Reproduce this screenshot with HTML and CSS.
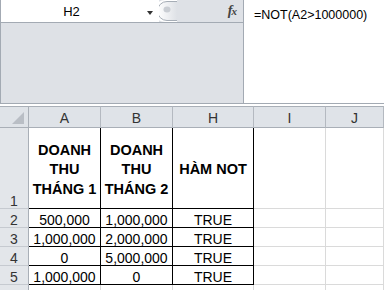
FILE: index.html
```html
<!DOCTYPE html>
<html lang="vi">
<head>
  <meta charset="UTF-8">
  <title>Hàm NOT</title>
  <link rel="stylesheet" href="styles.css">
</head>
<body>
  <div class="top">
    <div class="left">
      <div class="namerow">
        <div class="namebox">
          <span class="ref">H2</span>
          <span class="arrow"></span>
        </div>
        <svg class="knob" width="18" height="22" viewBox="0 0 18 22">
          <defs>
            <linearGradient id="kg" x1="0" y1="0" x2="1" y2="0">
              <stop offset="0" stop-color="#ffffff"/>
              <stop offset="1" stop-color="#dee1e6"/>
            </linearGradient>
          </defs>
          <path d="M18 0 L18 22 L6 22 A10 10 0 0 1 6 0 Z" fill="#fff"/>
          <path d="M18 1.5 L8 1.5 A9.5 9.5 0 0 0 8 20.5 L18 20.5" fill="url(#kg)" stroke="#a6adb6"/>
          <ellipse cx="8" cy="9.5" rx="3.5" ry="3" fill="#c9cdd3"/>
        </svg>
        <span class="fx"><i>f</i><i>x</i></span>
      </div>
    </div>
    <div class="formula">=NOT(A2&gt;1000000)</div>
  </div>
  <div class="gap"></div>

  <div class="sheet">
    <div class="hd corner"><span class="tri"></span></div>
    <div class="hd">A</div>
    <div class="hd">B</div>
    <div class="hd">H</div>
    <div class="hd">I</div>
    <div class="hd">J</div>

    <div class="rh">1</div>
    <div class="c title"><span>DOANH<br>THU<br>THÁNG 1</span></div>
    <div class="c title"><span>DOANH<br>THU<br>THÁNG 2</span></div>
    <div class="c title"><span>HÀM NOT</span></div>
    <div class="c empty"></div>
    <div class="c empty"></div>

    <div class="rh">2</div>
    <div class="c">500,000</div>
    <div class="c">1,000,000</div>
    <div class="c">TRUE</div>
    <div class="c empty"></div>
    <div class="c empty"></div>

    <div class="rh">3</div>
    <div class="c">1,000,000</div>
    <div class="c">2,000,000</div>
    <div class="c">TRUE</div>
    <div class="c empty"></div>
    <div class="c empty"></div>

    <div class="rh">4</div>
    <div class="c">0</div>
    <div class="c">5,000,000</div>
    <div class="c">TRUE</div>
    <div class="c empty"></div>
    <div class="c empty"></div>

    <div class="rh">5</div>
    <div class="c">1,000,000</div>
    <div class="c">0</div>
    <div class="c">TRUE</div>
    <div class="c empty"></div>
    <div class="c empty"></div>

    <div class="rh"></div>
    <div class="c empty"></div>
    <div class="c empty"></div>
    <div class="c empty"></div>
    <div class="c empty"></div>
    <div class="c empty"></div>
  </div>
</body>
</html>
```

FILE: styles.css
```css
body {
  margin: 0;
  width: 384px;
  height: 290px;
  overflow: hidden;
  background: #fff;
  font-family: "Liberation Sans", Arial, sans-serif;
  color: #000;
}
.top {
  display: flex;
  height: 103px;
  border-bottom: 1px solid #a3aab3;
}
.left {
  width: 242px;
  background: #dee1e6;
  border-left: 1px solid #a3aab3;
  border-right: 1px solid #a3aab3;
}
.namerow {
  display: flex;
  align-items: stretch;
  height: 22px;
  border-bottom: 1px solid #a3aab3;
}
.namebox {
  display: flex;
  align-items: center;
  width: 158px;
  background: #fff;
}
.ref {
  width: 141px;
  text-align: center;
  font-size: 13px;
  line-height: 22px;
  padding-top: 2px;
}
.arrow {
  width: 0;
  height: 0;
  margin-left: 5px;
  margin-top: 3px;
  border-left: 3.5px solid transparent;
  border-right: 3.5px solid transparent;
  border-top: 4px solid #333;
}
.knob {
  display: block;
}
.fx {
  margin-left: auto;
  margin-right: 6px;
  font-family: "Liberation Serif", serif;
  font-weight: bold;
  font-size: 14px;
  line-height: 22px;
  color: #444;
}
.fx i + i {
  font-size: 11px;
  margin-left: -1px;
}
.formula {
  flex: 1;
  background: #fff;
  padding: 7px 0 0 10px;
  font-size: 12.5px;
  line-height: 16px;
  white-space: nowrap;
}
.gap {
  height: 2px;
  background: #fff;
}
.sheet {
  display: grid;
  grid-template-columns: 29px 72px 72px 81px 72px 1fr;
  grid-template-rows: 22px 81px 19px 19px 19px 19px 19px;
}
.hd {
  display: flex;
  justify-content: center;
  align-items: center;
  padding-top: 2px;
  background: #dfe3e8;
  border-top: 1px solid #a9afb7;
  border-bottom: 1px solid #a9afb7;
  border-right: 1px solid #b4b9c0;
  font-size: 14px;
  color: #333;
}
.corner {
  position: relative;
  border-right-color: #a9afb7;
}
.tri {
  position: absolute;
  right: 4px;
  bottom: 3px;
  width: 0;
  height: 0;
  border-left: 12px solid transparent;
  border-bottom: 12px solid #b9bec5;
}
.rh {
  display: flex;
  justify-content: center;
  align-items: flex-end;
  background: #e3e6ea;
  border-right: 1px solid #a9afb7;
  border-bottom: 1px solid #c6cad0;
  font-size: 14px;
  line-height: 14px;
  color: #333;
}
.c {
  display: flex;
  justify-content: center;
  align-items: flex-end;
  border-right: 1px solid #000;
  border-bottom: 1px solid #000;
  font-size: 14px;
  line-height: 14px;
}
.c.empty {
  border-right-color: #dadada;
  border-bottom-color: #dadada;
}
.title {
  align-items: center;
  padding-top: 4px;
  text-align: center;
  font-weight: bold;
  font-size: 14.5px;
  line-height: 19.5px;
}
.sheet > :nth-last-child(-n+5) {
  border-color: #dadada;
}
```
